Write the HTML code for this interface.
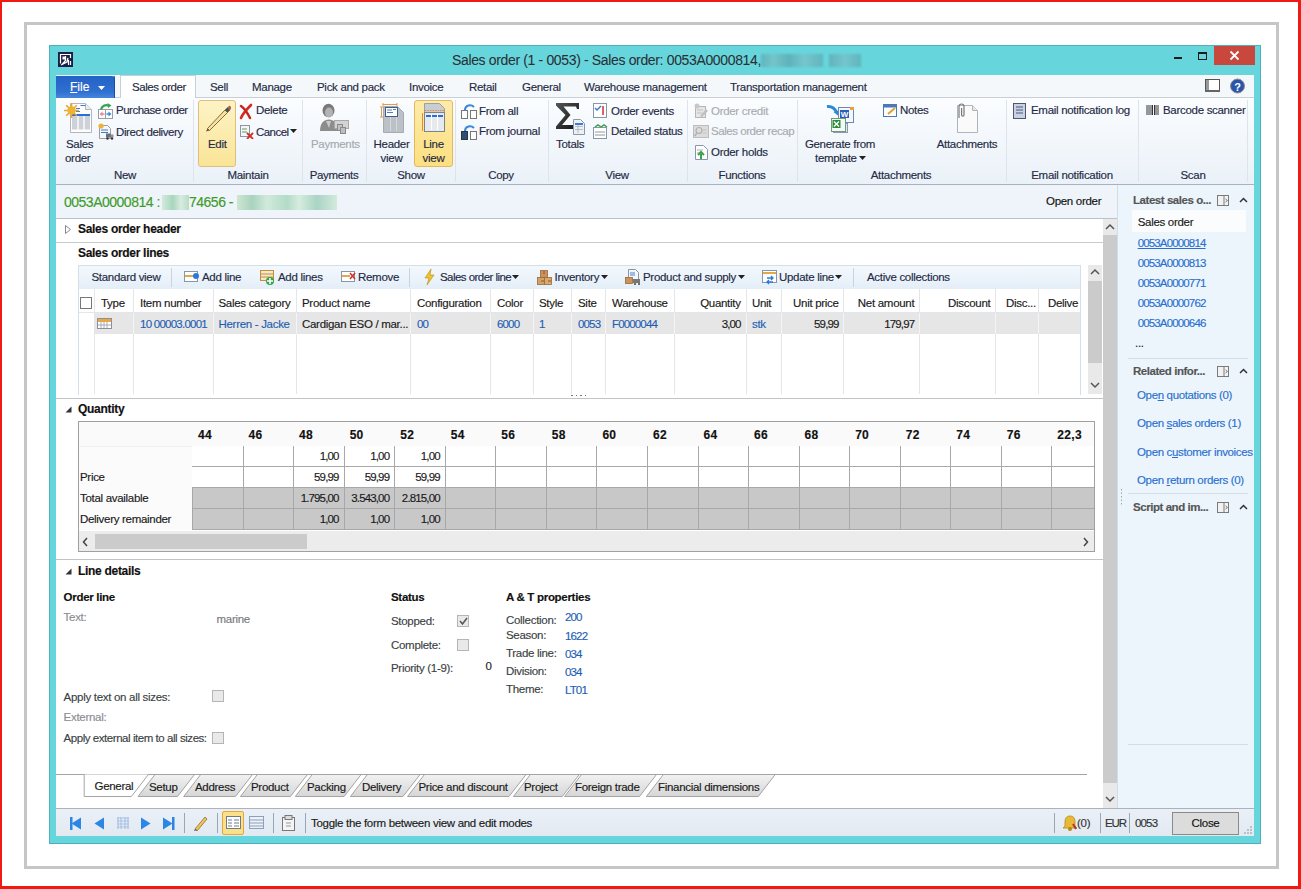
<!DOCTYPE html><html><head><meta charset="utf-8"><style>
*{margin:0;padding:0;box-sizing:border-box}
html,body{width:1301px;height:889px;overflow:hidden;background:#fff}
body{position:relative;font-family:"Liberation Sans",sans-serif;font-size:11px;color:#1f2a44}
.a{position:absolute}
.t{position:absolute;white-space:nowrap;line-height:14px;font-size:11.5px;letter-spacing:-0.3px;-webkit-text-stroke:0.15px currentColor}
.b{font-weight:bold;color:#111}
.lnk{color:#1e5fb4}
.gr{color:#a0a4aa}
.dk{color:#222}
</style></head><body>
<div class="a" style="left:0px;top:0px;width:1301px;height:889px;border:solid #f01a12;border-width:2px 3px 3px 2px"></div>
<div class="a" style="left:24px;top:22px;width:1255px;height:847px;border:3px solid #c6c6c6"></div>
<div class="a" style="left:49px;top:45px;width:1212px;height:799px;background:#66d5dc;border:1px solid #4fb0bd"></div>
<div class="t" style="left:452px;top:51px;font-size:14px;line-height:18px;letter-spacing:-0.35px;color:#2b2f33;-webkit-text-stroke:0.05px currentColor">Sales order (1 - 0053) - Sales order: 0053A0000814,</div>
<div class="a" style="left:761px;top:54px;width:62px;height:13px;background:linear-gradient(90deg,#5d9ba3,#7fb9bf 20%,#5a969e 45%,#82bcc2 70%,#5d9ba3);opacity:.55;filter:blur(1px)"></div>
<div class="a" style="left:829px;top:54px;width:32px;height:13px;background:linear-gradient(90deg,#5d9ba3,#80bac0 50%,#5d9ba3);opacity:.55;filter:blur(1px)"></div>
<svg class="a" style="left:58px;top:52px;" width="15" height="15" viewBox="0 0 15 15"><rect width="15" height="15" fill="#1a1f48"/><path d="M2.5 11.5V2.5H12.5V6" stroke="#fff" stroke-width="1.2" fill="none"/><rect x="4.5" y="4.5" width="3" height="3" fill="#fff"/><path d="M7.5 4v4.5L4 12.5M3 13l6-3 1-4" stroke="#fff" stroke-width="1.3" fill="none"/><path d="M10.5 8v5M12.5 9v4" stroke="#fff" stroke-width="1.2"/></svg>
<div class="a" style="left:1174px;top:57px;width:8px;height:2px;background:#1a1a1a"></div>
<div class="a" style="left:1198px;top:52px;width:9px;height:8px;border:1.5px solid #1a1a1a;border-top-width:2.5px"></div>
<div class="a" style="left:1214px;top:46px;width:41px;height:19px;background:#c9483e"></div>
<svg class="a" style="left:1229px;top:50px;" width="11" height="11" viewBox="0 0 11 11"><path d="M1.5 1.5L9.5 9.5M9.5 1.5L1.5 9.5" stroke="#fff" stroke-width="1.8"/></svg>
<div class="a" style="left:56px;top:75px;width:1198px;height:23px;background:#f5f8fb;border-bottom:1px solid #c9cfd6"></div>
<div class="a" style="left:56px;top:75px;width:59px;height:23px;background:linear-gradient(#2462c6,#2f6fd0 70%,#4586dc);border-top:1px solid #e8f0fa;border-right:1px solid #1f4aa0;border-radius:0 3px 0 0"></div>
<div class="t" style="left:70px;top:80.0px;color:#fff;font-size:12px;letter-spacing:0"><u>F</u>ile</div>
<svg class="a" style="left:98px;top:86px;" width="7" height="4" viewBox="0 0 7 4"><path d="M0 0h7L3.5 4z" fill="#fff"/></svg>
<div class="a" style="left:120px;top:75px;width:76px;height:23px;background:#fff;border:1px solid #c9cfd6;border-bottom:none"></div>
<div class="t" style="left:132px;top:79.5px;color:#1f2a44;letter-spacing:-0.45px">Sales order</div>
<div class="t" style="left:210px;top:79.5px;color:#1f2a44">Sell</div>
<div class="t" style="left:252px;top:79.5px;color:#1f2a44">Manage</div>
<div class="t" style="left:317px;top:79.5px;color:#1f2a44">Pick and pack</div>
<div class="t" style="left:409px;top:79.5px;color:#1f2a44">Invoice</div>
<div class="t" style="left:469px;top:79.5px;color:#1f2a44">Retail</div>
<div class="t" style="left:522px;top:79.5px;color:#1f2a44">General</div>
<div class="t" style="left:584px;top:79.5px;color:#1f2a44">Warehouse management</div>
<div class="t" style="left:730px;top:79.5px;color:#1f2a44">Transportation management</div>
<svg class="a" style="left:1205px;top:79px;" width="15" height="14" viewBox="0 0 15 14"><rect x="0.5" y="0.5" width="14" height="12" fill="#fff" stroke="#555"/><rect x="1" y="1" width="3" height="11" fill="#999"/><rect x="0" y="11" width="15" height="2" fill="#666"/></svg>
<svg class="a" style="left:1230px;top:78px;" width="15" height="16" viewBox="0 0 15 16"><circle cx="7.5" cy="8" r="7" fill="#2a55a8" stroke="#8a8f99" stroke-width="1"/><text x="7.5" y="12.5" font-size="11" font-weight="bold" text-anchor="middle" fill="#fff" font-family="Liberation Sans">?</text></svg>
<div class="a" style="left:56px;top:98px;width:1198px;height:87px;background:linear-gradient(#fbfdff,#eaf1f8);border-bottom:1px solid #a9b3bd"></div>
<div class="a" style="left:193px;top:100px;width:1px;height:82px;background:#dde4ec"></div>
<div class="a" style="left:302px;top:100px;width:1px;height:82px;background:#dde4ec"></div>
<div class="a" style="left:366px;top:100px;width:1px;height:82px;background:#dde4ec"></div>
<div class="a" style="left:455px;top:100px;width:1px;height:82px;background:#dde4ec"></div>
<div class="a" style="left:548px;top:100px;width:1px;height:82px;background:#dde4ec"></div>
<div class="a" style="left:687px;top:100px;width:1px;height:82px;background:#dde4ec"></div>
<div class="a" style="left:797px;top:100px;width:1px;height:82px;background:#dde4ec"></div>
<div class="a" style="left:1006px;top:100px;width:1px;height:82px;background:#dde4ec"></div>
<div class="a" style="left:1138px;top:100px;width:1px;height:82px;background:#dde4ec"></div>
<div class="a" style="left:1247px;top:100px;width:1px;height:82px;background:#dde4ec"></div>
<div class="t" style="left:-25px;width:300px;text-align:center;top:168.3px;color:#1f2a44">New</div>
<div class="t" style="left:98px;width:300px;text-align:center;top:168.3px;color:#1f2a44">Maintain</div>
<div class="t" style="left:184px;width:300px;text-align:center;top:168.3px;color:#1f2a44">Payments</div>
<div class="t" style="left:261px;width:300px;text-align:center;top:168.3px;color:#1f2a44">Show</div>
<div class="t" style="left:351px;width:300px;text-align:center;top:168.3px;color:#1f2a44">Copy</div>
<div class="t" style="left:467px;width:300px;text-align:center;top:168.3px;color:#1f2a44">View</div>
<div class="t" style="left:592px;width:300px;text-align:center;top:168.3px;color:#1f2a44">Functions</div>
<div class="t" style="left:751px;width:300px;text-align:center;top:168.3px;color:#1f2a44">Attachments</div>
<div class="t" style="left:922px;width:300px;text-align:center;top:168.3px;color:#1f2a44">Email notification</div>
<div class="t" style="left:1043px;width:300px;text-align:center;top:168.3px;color:#1f2a44">Scan</div>
<div class="a" style="left:198px;top:100px;width:38px;height:67px;background:linear-gradient(#fdf3c6,#fae497);border:1px solid #dcc07a;border-radius:3px"></div>
<div class="a" style="left:414px;top:100px;width:39px;height:67px;background:linear-gradient(#fdeba8,#fcdf80);border:1px solid #e2b860;border-radius:3px"></div>
<svg class="a" style="left:62px;top:101px;" width="32" height="33" viewBox="0 0 32 33"><path d="M8.5 2.5h15l6 6v23h-21z" fill="#fdfdfd" stroke="#b3b7bb"/><path d="M23.5 2.5v6h6" fill="#ececec" stroke="#b3b7bb"/><rect x="10" y="13.5" width="18" height="15" fill="#cdd2d8"/><path d="M16 13v16M22 13v16" stroke="#fff" stroke-width="1.3"/><rect x="10" y="13" width="18" height="2" fill="#2a6fd6"/><path d="M18.5 4.5h5M14 7.5h4M14 10.5h4" stroke="#3a7bd5" stroke-width="1.2"/><g stroke="#eaa62a" stroke-width="1.6"><path d="M9.5 2v15M2 9.5h15M4.2 4.2l10.6 10.6M14.8 4.2L4.2 14.8"/></g><circle cx="9.5" cy="9.5" r="4.2" fill="#f0b233"/></svg>
<div class="t" style="left:66px;top:136.8px;">Sales</div>
<div class="t" style="left:65px;top:151.0px;">order</div>
<svg class="a" style="left:98px;top:102px;" width="16" height="17" viewBox="0 0 16 17"><rect x="0.5" y="7.5" width="7" height="9" fill="#fff" stroke="#9a9ea3"/><rect x="7.5" y="7.5" width="7" height="9" fill="#fff" stroke="#9a9ea3"/><path d="M1.5 12l3-2.5v1.7h2v1.6h-2v1.7z" fill="#e48aa2"/><path d="M13.5 12l-3-2.5v1.7h-2v1.6h2v1.7z" fill="#3a8ad8"/><path d="M3 7.5C4 4 7 2.5 10.5 3.5" stroke="#3aa24a" stroke-width="2.2" fill="none"/><path d="M9.5 1l4 2.5-3.5 2.5z" fill="#3aa24a"/></svg>
<div class="t" style="left:116px;top:103.3px;letter-spacing:-0.5px">Purchase order</div>
<svg class="a" style="left:98px;top:123px;" width="16" height="17" viewBox="0 0 16 17"><path d="M1.5 2.5h8l3 3v10h-11z" fill="#f6f7f9" stroke="#9aa0a6"/><path d="M3 7h7M3 9.5h7" stroke="#3a7bd5"/><circle cx="3" cy="3" r="2.6" fill="#f0b233"/><rect x="8" y="10.5" width="5" height="4" fill="#6a7078"/><rect x="12.5" y="11.5" width="3" height="3" fill="#8a9098"/><circle cx="9.5" cy="15.5" r="1.2" fill="#333"/><circle cx="14" cy="15.5" r="1.2" fill="#333"/></svg>
<div class="t" style="left:116px;top:124.5px;letter-spacing:-0.4px">Direct delivery</div>
<svg class="a" style="left:203px;top:103px;" width="28" height="30" viewBox="0 0 28 30"><path d="M4.5 25.5L22 7l2.5 2.5L6.5 27.5z" fill="#f5e3a0" stroke="#8a6a3a"/><path d="M22 7l2.5-2.5 2.5 2.5L24.5 9.5z" fill="#3d5c4f" stroke="#6a5040" stroke-width=".6"/><path d="M24.5 4.5l2-2 2.5 2.5-2 2z" fill="#b85a4a"/><path d="M4.5 25.5l-1.5 3 3.5-1z" fill="#6a4a3a"/></svg>
<div class="t" style="left:208px;top:137.0px;">Edit</div>
<svg class="a" style="left:238px;top:103px;" width="16" height="17" viewBox="0 0 16 17"><path d="M3 3c3 2 7 8 9 12M13 2c-3 3-8 8-10 13" stroke="#d42a22" stroke-width="2.6" stroke-linecap="round" fill="none"/><path d="M3 3c3 2 7 8 9 12" stroke="#9a2a22" stroke-width=".8" fill="none"/></svg>
<div class="t" style="left:256px;top:103.3px;">Delete</div>
<svg class="a" style="left:239px;top:124px;" width="15" height="15" viewBox="0 0 15 15"><rect x="1.5" y="1.5" width="9" height="11" fill="#f4f6f8" stroke="#8a96a3"/><path d="M3 5h5M3 8h5" stroke="#5aa05a"/><path d="M8 9l6 6M14 9l-6 6" stroke="#d0302a" stroke-width="1.8"/></svg>
<div class="t" style="left:256px;top:124.5px;letter-spacing:-0.55px">Cancel</div>
<svg class="a" style="left:290px;top:129px;" width="7" height="4" viewBox="0 0 7 4"><path d="M0 0h7L3.5 4z" fill="#222"/></svg>
<svg class="a" style="left:318px;top:102px;" width="32" height="33" viewBox="0 0 32 33"><path d="M2 29C2 21 6 17.5 11 17.5S19 21 19 29z" fill="#8c8c8c"/><ellipse cx="10.5" cy="8.5" rx="6" ry="6.8" fill="#7a7a7a"/><ellipse cx="11" cy="10.5" rx="4" ry="5" fill="#b3b3b3"/><path d="M8 19l3 7 2-7" fill="#c8c8c8"/><rect x="16.5" y="18.5" width="14" height="8" fill="#d3d3d3" stroke="#a8a8a8"/><rect x="19.5" y="22.5" width="5" height="6" fill="#c4c4c4" stroke="#8a8a8a"/><rect x="22.5" y="25.5" width="5" height="6" fill="#bdbdbd" stroke="#8a8a8a"/></svg>
<div class="t" style="left:311px;top:137.0px;color:#a6a9ad">Payments</div>
<svg class="a" style="left:380px;top:102px;" width="26" height="32" viewBox="0 0 26 32"><path d="M3.5 4.5h14l6 6v20h-20z" fill="#bcc1c7" stroke="#a6abb1"/><path d="M10.5 15v14M16.5 15v14" stroke="#d5d9dd"/><rect x="5.5" y="5.5" width="12" height="9" fill="#fff" stroke="#3f5f8f"/><path d="M7 8h5M7 10.5h6M13 7.5h3" stroke="#4a7fd0"/><path d="M3 2.5H17M3 1v3M17 1v3M1.5 5v10M0 5h3M0 15h3" stroke="#ea9a44"/></svg>
<div class="t" style="left:241.5px;width:300px;text-align:center;top:137.0px;">Header</div>
<div class="t" style="left:241.5px;width:300px;text-align:center;top:150.7px;">view</div>
<svg class="a" style="left:420px;top:102px;" width="28" height="32" viewBox="0 0 28 32"><path d="M4.5 1.5h15l5 5v4h-20z" fill="#c9cdd2" stroke="#9aa0a6"/><rect x="4.5" y="10.5" width="20" height="19" fill="#e6e9ee" stroke="#7d838a"/><rect x="6" y="13" width="17" height="2" fill="#2a6fd6"/><path d="M11.5 12v16M17.5 12v16" stroke="#fff"/><path d="M5 8.5H24" stroke="#e58a3a" stroke-dasharray="1.5 1"/><path d="M2.5 11V29" stroke="#e58a3a"/></svg>
<div class="t" style="left:283.5px;width:300px;text-align:center;top:137.0px;">Line</div>
<div class="t" style="left:283.5px;width:300px;text-align:center;top:150.7px;">view</div>
<svg class="a" style="left:461px;top:103px;" width="16" height="16" viewBox="0 0 16 16"><rect x="0.5" y="7.5" width="6" height="8" fill="#fff" stroke="#777"/><rect x="9.5" y="7.5" width="6" height="8" fill="#fff" stroke="#777"/><path d="M4 7c0-5 6-6 9-3" stroke="#3a88d8" stroke-width="2" fill="none"/></svg>
<div class="t" style="left:479px;top:103.7px;">From all</div>
<svg class="a" style="left:461px;top:124px;" width="16" height="16" viewBox="0 0 16 16"><rect x="0.5" y="7.5" width="6" height="8" fill="#2a4f78" stroke="#333"/><rect x="9.5" y="7.5" width="6" height="8" fill="#fff" stroke="#777"/><path d="M4 7c0-5 6-6 9-3" stroke="#3a88d8" stroke-width="2" fill="none"/></svg>
<div class="t" style="left:479px;top:124.4px;">From journal</div>
<svg class="a" style="left:555px;top:102px;" width="31" height="33" viewBox="0 0 31 33"><defs><linearGradient id="sg" x1="0" y1="0" x2="1" y2="1"><stop offset="0" stop-color="#555"/><stop offset="1" stop-color="#111"/></linearGradient></defs><path d="M1 1H24V7H22L21 4.5H8.5L15.5 13L7 23H18V27H1V24.5L10.5 13L1 3.5z" fill="url(#sg)"/><path d="M18.5 17.5h7l4 4v11h-11z" fill="#eef1f4" stroke="#8a96a3"/><rect x="20" y="21" width="8" height="2" fill="#3a7bd5"/><path d="M20 24.5h8M20 27.5h8M23 23v8" stroke="#aab4bf" stroke-width=".8"/></svg>
<div class="t" style="left:556px;top:137.0px;">Totals</div>
<svg class="a" style="left:593px;top:103px;" width="14" height="15" viewBox="0 0 14 15"><rect x="0.5" y="0.5" width="13" height="14" fill="#fff" stroke="#8a96a3"/><path d="M2 5l2 2 4-4" stroke="#3a7bd5" stroke-width="1.5" fill="none"/><path d="M10 3v9" stroke="#d0302a" stroke-width="1.5"/></svg>
<div class="t" style="left:611px;top:103.5px;letter-spacing:-0.3px">Order events</div>
<svg class="a" style="left:593px;top:124px;" width="15" height="15" viewBox="0 0 15 15"><rect x="0.5" y="3.5" width="13" height="11" fill="#fff" stroke="#8a96a3"/><path d="M2 3l3-2 3 2M8 3l3-2 3 2" stroke="#3aa24a" stroke-width="1.5" fill="none"/><path d="M2 8h10M2 11h10" stroke="#8a96a3"/></svg>
<div class="t" style="left:611px;top:124.2px;letter-spacing:-0.3px">Detailed status</div>
<svg class="a" style="left:693px;top:103px;" width="16" height="16" viewBox="0 0 16 16"><rect x="2.5" y="3.5" width="10" height="11" fill="#e6e6e6" stroke="#b5b5b5"/><path d="M4 7h6M4 10h5" stroke="#c0c0c0"/><circle cx="4" cy="3" r="2.5" fill="#c8c8c8"/><path d="M7 13l6-7 2 2-6 6z" fill="#c0c0c0"/></svg>
<div class="t" style="left:711px;top:103.5px;color:#a8abb0">Order credit</div>
<svg class="a" style="left:693px;top:125px;" width="16" height="13" viewBox="0 0 16 13"><rect x="0.5" y="0.5" width="15" height="12" fill="#dcdcdc" stroke="#bdbdbd"/><circle cx="6" cy="5.5" r="3" fill="none" stroke="#b0b0b0" stroke-width="1.2"/><path d="M4 8l-2.5 3" stroke="#b0b0b0" stroke-width="1.4"/><path d="M10 5h4M10 8h4" stroke="#c4c4c4"/></svg>
<div class="t" style="left:711px;top:124.2px;color:#a8abb0;letter-spacing:-0.45px">Sales order recap</div>
<svg class="a" style="left:694px;top:145px;" width="15" height="15" viewBox="0 0 15 15"><path d="M1.5 0.5h8l4 4v10h-12z" fill="#fff" stroke="#8a96a3"/><path d="M3 5h6M3 8h6" stroke="#aaa"/><path d="M7 14v-5M4 10l3-3 3 3" stroke="#3aa24a" stroke-width="2" fill="none"/></svg>
<div class="t" style="left:711px;top:145.2px;">Order holds</div>
<svg class="a" style="left:824px;top:103px;" width="32" height="32" viewBox="0 0 32 32"><path d="M3 3.5C8 3 11 5.5 12.5 9.5" stroke="#2a8ad8" stroke-width="3" fill="none"/><path d="M9.5 9l6-2-1 6z" fill="#2a8ad8"/><rect x="14.5" y="4.5" width="15" height="15" fill="#f4f7fb" stroke="#6a88b8"/><rect x="26" y="4" width="4" height="3" fill="#e8a040"/><rect x="16" y="7" width="9" height="8" fill="#2b5fb8"/><text x="20.5" y="14" font-size="8" fill="#fff" text-anchor="middle" font-family="Liberation Sans" font-weight="bold">W</text><rect x="9.5" y="20.5" width="14" height="9" fill="#dfe5ec" stroke="#8a9aaa"/><rect x="7.5" y="15.5" width="14" height="13" fill="#f4f7fb" stroke="#6aa070"/><rect x="8.5" y="17" width="8" height="8" fill="#2f8a3a"/><path d="M10 18.5l5 5M15 18.5l-5 5" stroke="#fff" stroke-width="1.3"/></svg>
<div class="t" style="left:690px;width:300px;text-align:center;top:136.8px;">Generate from</div>
<div class="t" style="left:815px;top:151.0px;">template</div>
<svg class="a" style="left:859px;top:156px;" width="7" height="4" viewBox="0 0 7 4"><path d="M0 0h7L3.5 4z" fill="#222"/></svg>
<svg class="a" style="left:883px;top:104px;" width="15" height="13" viewBox="0 0 15 13"><rect x="0.5" y="0.5" width="13" height="12" fill="#fff" stroke="#4d77b8"/><rect x="0.5" y="0.5" width="13" height="3" fill="#4d77b8"/><path d="M5 10l7-6" stroke="#e0a030" stroke-width="2"/></svg>
<div class="t" style="left:900px;top:103.3px;">Notes</div>
<svg class="a" style="left:954px;top:102px;" width="26" height="32" viewBox="0 0 26 32"><path d="M3.5 3.5h15l5 5v22h-20z" fill="#fafafa" stroke="#b0b4b8"/><path d="M18.5 3.5v5h5" fill="#e8e8e8" stroke="#b0b4b8"/><path d="M5 16V4.5a2.5 2.5 0 015 0V13a1.2 1.2 0 01-2.4 0V6" stroke="#7a7a7a" stroke-width="1.2" fill="none"/></svg>
<div class="t" style="left:817px;width:300px;text-align:center;top:136.6px;">Attachments</div>
<svg class="a" style="left:1013px;top:103px;" width="13" height="16" viewBox="0 0 13 16"><rect x="0.5" y="0.5" width="12" height="15" fill="#c5d3e8" stroke="#556"/><path d="M3 4h7M3 7h7M3 10h7" stroke="#556"/></svg>
<div class="t" style="left:1031px;top:103.3px;">Email notification log</div>
<svg class="a" style="left:1146px;top:105px;" width="13" height="10" viewBox="0 0 13 10"><path d="M1 0v10M3 0v10M5 0v10M6.5 0v10M8.5 0v10M10 0v10M12 0v10" stroke="#333" stroke-width="1"/></svg>
<div class="t" style="left:1163px;top:103.3px;">Barcode scanner</div>
<div class="a" style="left:56px;top:185px;width:1062px;height:34px;background:#eef4fa;border-bottom:1px solid #b9c1c9"></div>
<div class="t" style="left:64px;top:193px;font-size:14px;line-height:18px;letter-spacing:-0.5px;color:#3e9b2c">0053A0000814 :</div>
<div class="a" style="left:162px;top:195px;width:27px;height:15px;background:linear-gradient(90deg,#d3ebdd,#a9d6bd 40%,#d6ecdf 70%,#b9dcc8);filter:blur(.7px)"></div>
<div class="t" style="left:189px;top:193px;font-size:14px;line-height:18px;letter-spacing:-0.5px;color:#3e9b2c">74656 -</div>
<div class="a" style="left:237px;top:195px;width:100px;height:15px;background:linear-gradient(90deg,#cfe6d0,#a8d3c0 15%,#d0eadb 30%,#b3dbc8 50%,#d6ecdd 62%,#a9d4c4 80%,#d3eadc);filter:blur(.7px)"></div>
<div class="t" style="left:1046px;top:194.0px;color:#111">Open order</div>
<div class="a" style="left:56px;top:219px;width:1047px;height:589px;background:#fff"></div>
<svg class="a" style="left:65px;top:225px;" width="6" height="9" viewBox="0 0 6 9"><path d="M0.5 0.5l5 4-5 4z" fill="#fff" stroke="#888"/></svg>
<div class="t b" style="left:78px;top:222.2px;font-size:12px;letter-spacing:-0.3px">Sales order header</div>
<div class="a" style="left:56px;top:242px;width:1047px;height:1px;background:#c7ccd1"></div>
<div class="t b" style="left:78px;top:246.0px;font-size:12px;letter-spacing:-0.3px">Sales order lines</div>
<div class="a" style="left:78px;top:265px;width:1003px;height:25px;background:linear-gradient(#f3f8fd,#e4eef8);border:1px solid #d5dfe9"></div>
<div class="t" style="left:91.5px;top:270.2px;">Standard view</div>
<div class="a" style="left:171px;top:268px;width:1px;height:19px;background:#c9d3dd"></div>
<div class="a" style="left:409px;top:268px;width:1px;height:19px;background:#c9d3dd"></div>
<div class="a" style="left:853px;top:268px;width:1px;height:19px;background:#c9d3dd"></div>
<svg class="a" style="left:184px;top:271px;" width="15" height="12" viewBox="0 0 15 12"><rect x="0.5" y="0.5" width="13" height="10" fill="#fff" stroke="#8a96a3"/><path d="M1 5h10" stroke="#e2a84a" stroke-width="2"/><circle cx="12" cy="5" r="3" fill="#2a78d8"/></svg>
<div class="t" style="left:202px;top:270.2px;">Add line</div>
<svg class="a" style="left:260px;top:270px;" width="15" height="15" viewBox="0 0 15 15"><rect x="0.5" y="0.5" width="13" height="10" fill="#f6e7c8" stroke="#c09040"/><path d="M1 4h12M1 7h12" stroke="#c09040"/><circle cx="10" cy="11" r="4" fill="#3aa24a"/><path d="M10 8v6M7 11h6" stroke="#fff" stroke-width="1.5"/></svg>
<div class="t" style="left:278px;top:270.2px;">Add lines</div>
<svg class="a" style="left:341px;top:271px;" width="15" height="12" viewBox="0 0 15 12"><rect x="0.5" y="0.5" width="13" height="10" fill="#fff" stroke="#8a96a3"/><path d="M1 5h8" stroke="#e2a84a" stroke-width="2"/><path d="M9 2l5 6M14 2l-5 6" stroke="#d0302a" stroke-width="1.5"/></svg>
<div class="t" style="left:358px;top:270.2px;">Remove</div>
<svg class="a" style="left:424px;top:269px;" width="11" height="16" viewBox="0 0 11 16"><path d="M7 0L1 9h4l-2 7 7-10H6z" fill="#f2c230" stroke="#b88a10" stroke-width="0.6"/></svg>
<div class="t" style="left:440px;top:270.2px;letter-spacing:-0.55px">Sales order line</div>
<svg class="a" style="left:512px;top:275px;" width="7" height="4" viewBox="0 0 7 4"><path d="M0 0h7L3.5 4z" fill="#222"/></svg>
<svg class="a" style="left:537px;top:269px;" width="15" height="16" viewBox="0 0 15 16"><rect x="0.5" y="8.5" width="7" height="7" fill="#d3a066" stroke="#9a6a3a" stroke-width=".8"/><rect x="7.5" y="8.5" width="7" height="7" fill="#d9a86e" stroke="#9a6a3a" stroke-width=".8"/><rect x="3.5" y="1.5" width="7" height="7" fill="#c8925a" stroke="#9a6a3a" stroke-width=".8"/><path d="M7 2v3M4 12h3M11 12h3" stroke="#8a5a2a"/></svg>
<div class="t" style="left:554.5px;top:270.2px;">Inventory</div>
<svg class="a" style="left:601px;top:275px;" width="7" height="4" viewBox="0 0 7 4"><path d="M0 0h7L3.5 4z" fill="#222"/></svg>
<svg class="a" style="left:625px;top:269px;" width="16" height="16" viewBox="0 0 16 16"><path d="M3.5 0.5h7l3 3v7h-10z" fill="#f4f6f8" stroke="#8a96a3"/><path d="M5 4h5M5 6h5" stroke="#4a7fd0"/><rect x="0.5" y="8.5" width="7" height="6" fill="#c8925a" stroke="#9a6a3a" stroke-width=".8"/><rect x="8" y="10" width="7" height="4" fill="#777"/><circle cx="10" cy="15" r="1" fill="#444"/><circle cx="14" cy="15" r="1" fill="#444"/></svg>
<div class="t" style="left:643px;top:270.2px;">Product and supply</div>
<svg class="a" style="left:738px;top:275px;" width="7" height="4" viewBox="0 0 7 4"><path d="M0 0h7L3.5 4z" fill="#222"/></svg>
<svg class="a" style="left:762px;top:270px;" width="16" height="15" viewBox="0 0 16 15"><rect x="0.5" y="0.5" width="14" height="12" fill="#fff" stroke="#8a96a3"/><path d="M1 3h13" stroke="#e2a84a" stroke-width="2"/><path d="M5 8h6M9 6l2 2-2 2M11 12H5M7 10l-2 2 2 2" stroke="#2a78d8" stroke-width="1.3" fill="none"/></svg>
<div class="t" style="left:779px;top:270.2px;">Update line</div>
<svg class="a" style="left:835px;top:275px;" width="7" height="4" viewBox="0 0 7 4"><path d="M0 0h7L3.5 4z" fill="#222"/></svg>
<div class="t" style="left:867px;top:270.2px;">Active collections</div>
<div class="a" style="left:78px;top:289px;width:1003px;height:24px;background:#fff;border-left:1px solid #d5dfe9;border-right:1px solid #d5dfe9"></div>
<div class="a" style="left:78px;top:312px;width:1003px;height:1px;background:#e3e6ea"></div>
<div class="a" style="left:94px;top:289px;width:1px;height:105px;background:#e4e6e9"></div>
<div class="a" style="left:133px;top:289px;width:1px;height:105px;background:#e4e6e9"></div>
<div class="a" style="left:213px;top:289px;width:1px;height:105px;background:#e4e6e9"></div>
<div class="a" style="left:296px;top:289px;width:1px;height:105px;background:#e4e6e9"></div>
<div class="a" style="left:410px;top:289px;width:1px;height:105px;background:#e4e6e9"></div>
<div class="a" style="left:490px;top:289px;width:1px;height:105px;background:#e4e6e9"></div>
<div class="a" style="left:533px;top:289px;width:1px;height:105px;background:#e4e6e9"></div>
<div class="a" style="left:571px;top:289px;width:1px;height:105px;background:#e4e6e9"></div>
<div class="a" style="left:605px;top:289px;width:1px;height:105px;background:#e4e6e9"></div>
<div class="a" style="left:674px;top:289px;width:1px;height:105px;background:#e4e6e9"></div>
<div class="a" style="left:746px;top:289px;width:1px;height:105px;background:#e4e6e9"></div>
<div class="a" style="left:781px;top:289px;width:1px;height:105px;background:#e4e6e9"></div>
<div class="a" style="left:843px;top:289px;width:1px;height:105px;background:#e4e6e9"></div>
<div class="a" style="left:919px;top:289px;width:1px;height:105px;background:#e4e6e9"></div>
<div class="a" style="left:995px;top:289px;width:1px;height:105px;background:#e4e6e9"></div>
<div class="a" style="left:1038px;top:289px;width:1px;height:105px;background:#e4e6e9"></div>
<div class="a" style="left:80px;top:297px;width:12px;height:12px;background:#fff;border:1px solid #777"></div>
<div class="t" style="left:101px;top:296.0px;color:#1a1a1a">Type</div>
<div class="t" style="left:140px;top:296.0px;color:#1a1a1a">Item number</div>
<div class="t" style="left:218.5px;top:296.0px;color:#1a1a1a">Sales category</div>
<div class="t" style="left:302px;top:296.0px;color:#1a1a1a">Product name</div>
<div class="t" style="left:417px;top:296.0px;color:#1a1a1a">Configuration</div>
<div class="t" style="left:497px;top:296.0px;color:#1a1a1a">Color</div>
<div class="t" style="left:539px;top:296.0px;color:#1a1a1a">Style</div>
<div class="t" style="left:578px;top:296.0px;color:#1a1a1a">Site</div>
<div class="t" style="left:612px;top:296.0px;color:#1a1a1a">Warehouse</div>
<div class="t" style="left:752px;top:296.0px;color:#1a1a1a">Unit</div>
<div class="t" style="left:1006px;top:296.0px;color:#1a1a1a">Disc...</div>
<div class="t" style="left:1048px;top:296.0px;color:#1a1a1a">Delive</div>
<div class="t" style="right:560.4px;top:296.0px;color:#1a1a1a">Quantity</div>
<div class="t" style="right:462.4px;top:296.0px;color:#1a1a1a">Unit price</div>
<div class="t" style="right:386.70000000000005px;top:296.0px;color:#1a1a1a">Net amount</div>
<div class="t" style="right:310.6px;top:296.0px;color:#1a1a1a">Discount</div>
<div class="a" style="left:95px;top:313px;width:986px;height:21px;background:#e6e6e6"></div>
<div class="a" style="left:133px;top:313px;width:1px;height:21px;background:#f4f4f4"></div>
<div class="a" style="left:213px;top:313px;width:1px;height:21px;background:#f4f4f4"></div>
<div class="a" style="left:296px;top:313px;width:1px;height:21px;background:#f4f4f4"></div>
<div class="a" style="left:410px;top:313px;width:1px;height:21px;background:#f4f4f4"></div>
<div class="a" style="left:490px;top:313px;width:1px;height:21px;background:#f4f4f4"></div>
<div class="a" style="left:533px;top:313px;width:1px;height:21px;background:#f4f4f4"></div>
<div class="a" style="left:571px;top:313px;width:1px;height:21px;background:#f4f4f4"></div>
<div class="a" style="left:605px;top:313px;width:1px;height:21px;background:#f4f4f4"></div>
<div class="a" style="left:674px;top:313px;width:1px;height:21px;background:#f4f4f4"></div>
<div class="a" style="left:746px;top:313px;width:1px;height:21px;background:#f4f4f4"></div>
<div class="a" style="left:781px;top:313px;width:1px;height:21px;background:#f4f4f4"></div>
<div class="a" style="left:843px;top:313px;width:1px;height:21px;background:#f4f4f4"></div>
<div class="a" style="left:919px;top:313px;width:1px;height:21px;background:#f4f4f4"></div>
<div class="a" style="left:995px;top:313px;width:1px;height:21px;background:#f4f4f4"></div>
<div class="a" style="left:1038px;top:313px;width:1px;height:21px;background:#f4f4f4"></div>
<svg class="a" style="left:97px;top:318px;" width="15" height="11" viewBox="0 0 15 11"><rect x="0.5" y="0.5" width="14" height="10" fill="#fff" stroke="#8a8f99"/><rect x="1" y="1" width="13" height="3" fill="#e8a84a"/><path d="M4 4v6M7 4v6M10 4v6M1 7h13" stroke="#aab"/></svg>
<div class="t lnk" style="left:140px;top:316.7px;letter-spacing:-0.75px">10 00003.0001</div>
<div class="t lnk" style="left:218.5px;top:316.7px;">Herren - Jacke</div>
<div class="t lnk" style="left:417px;top:316.7px;;letter-spacing:-0.85px">00</div>
<div class="t lnk" style="left:497px;top:316.7px;;letter-spacing:-0.85px">6000</div>
<div class="t lnk" style="left:539px;top:316.7px;;letter-spacing:-0.85px">1</div>
<div class="t lnk" style="left:578px;top:316.7px;;letter-spacing:-0.85px">0053</div>
<div class="t lnk" style="left:612px;top:316.7px;;letter-spacing:-0.85px">F0000044</div>
<div class="t lnk" style="left:752px;top:316.7px;">stk</div>
<div class="t" style="left:302px;top:316.7px;color:#1a1a1a">Cardigan ESO / mar...</div>
<div class="t" style="right:560.4px;top:316.7px;color:#1a1a1a;letter-spacing:-0.85px">3,00</div>
<div class="t" style="right:462.4px;top:316.7px;color:#1a1a1a;letter-spacing:-0.85px">59,99</div>
<div class="t" style="right:386.70000000000005px;top:316.7px;color:#1a1a1a;letter-spacing:-0.85px">179,97</div>
<div class="a" style="left:78px;top:289px;width:1px;height:106px;background:#d5dfe9"></div>
<div class="a" style="left:1080px;top:289px;width:1px;height:106px;background:#d5dfe9"></div>
<div class="a" style="left:571.0px;top:394.5px;width:1.5px;height:1.5px;background:#777"></div>
<div class="a" style="left:575.5px;top:394.5px;width:1.5px;height:1.5px;background:#777"></div>
<div class="a" style="left:580.0px;top:394.5px;width:1.5px;height:1.5px;background:#777"></div>
<div class="a" style="left:584.5px;top:394.5px;width:1.5px;height:1.5px;background:#777"></div>
<div class="a" style="left:1088px;top:265px;width:14px;height:129px;background:#e9e9e9"></div>
<div class="a" style="left:1088px;top:281px;width:14px;height:82px;background:#cbcbcb"></div>
<svg class="a" style="left:1090px;top:268px;" width="10" height="8" viewBox="0 0 10 8"><path d="M1 6l4-4 4 4" stroke="#555" stroke-width="1.5" fill="none"/></svg>
<svg class="a" style="left:1090px;top:381px;" width="10" height="8" viewBox="0 0 10 8"><path d="M1 2l4 4 4-4" stroke="#555" stroke-width="1.5" fill="none"/></svg>
<div class="a" style="left:56px;top:398px;width:1047px;height:1px;background:#bfc4c9"></div>
<div class="a" style="left:1103px;top:219px;width:14px;height:589px;background:#e9e9e9"></div>
<div class="a" style="left:1103px;top:235px;width:14px;height:548px;background:#cbcbcb"></div>
<svg class="a" style="left:1105px;top:223px;" width="10" height="8" viewBox="0 0 10 8"><path d="M1 6l4-4 4 4" stroke="#555" stroke-width="1.5" fill="none"/></svg>
<svg class="a" style="left:1105px;top:795px;" width="10" height="8" viewBox="0 0 10 8"><path d="M1 2l4 4 4-4" stroke="#555" stroke-width="1.5" fill="none"/></svg>
<svg class="a" style="left:65px;top:406px;" width="7" height="7" viewBox="0 0 7 7"><path d="M6.5 0.5v6h-6z" fill="#333"/></svg>
<div class="t b" style="left:78px;top:402.0px;font-size:12px;letter-spacing:-0.3px">Quantity</div>
<div class="a" style="left:78px;top:421px;width:1017px;height:131px;background:#fff;border:1px solid #a0a0a0"></div>
<div class="a" style="left:79px;top:422px;width:1015px;height:24px;background:#fafafa"></div>
<div class="a" style="left:79px;top:446px;width:113px;height:84px;background:#fbfbfb"></div>
<div class="a" style="left:192px;top:488px;width:902px;height:42px;background:#c8c8c8"></div>
<div class="a" style="left:243px;top:446px;width:1px;height:84px;background:#a8a8a8"></div>
<div class="a" style="left:293px;top:446px;width:1px;height:84px;background:#a8a8a8"></div>
<div class="a" style="left:344px;top:446px;width:1px;height:84px;background:#a8a8a8"></div>
<div class="a" style="left:394px;top:446px;width:1px;height:84px;background:#a8a8a8"></div>
<div class="a" style="left:445px;top:446px;width:1px;height:84px;background:#a8a8a8"></div>
<div class="a" style="left:495px;top:446px;width:1px;height:84px;background:#a8a8a8"></div>
<div class="a" style="left:546px;top:446px;width:1px;height:84px;background:#a8a8a8"></div>
<div class="a" style="left:596px;top:446px;width:1px;height:84px;background:#a8a8a8"></div>
<div class="a" style="left:647px;top:446px;width:1px;height:84px;background:#a8a8a8"></div>
<div class="a" style="left:698px;top:446px;width:1px;height:84px;background:#a8a8a8"></div>
<div class="a" style="left:748px;top:446px;width:1px;height:84px;background:#a8a8a8"></div>
<div class="a" style="left:799px;top:446px;width:1px;height:84px;background:#a8a8a8"></div>
<div class="a" style="left:849px;top:446px;width:1px;height:84px;background:#a8a8a8"></div>
<div class="a" style="left:900px;top:446px;width:1px;height:84px;background:#a8a8a8"></div>
<div class="a" style="left:950px;top:446px;width:1px;height:84px;background:#a8a8a8"></div>
<div class="a" style="left:1001px;top:446px;width:1px;height:84px;background:#a8a8a8"></div>
<div class="a" style="left:1051px;top:446px;width:1px;height:84px;background:#a8a8a8"></div>
<div class="a" style="left:192px;top:488px;width:1px;height:42px;background:#a8a8a8"></div>
<div class="a" style="left:192px;top:466px;width:902px;height:1px;background:#a8a8a8"></div>
<div class="a" style="left:192px;top:487px;width:902px;height:1px;background:#a8a8a8"></div>
<div class="a" style="left:192px;top:508px;width:902px;height:1px;background:#a8a8a8"></div>
<div class="a" style="left:192px;top:529px;width:902px;height:1px;background:#a8a8a8"></div>
<div class="a" style="left:79px;top:446px;width:113px;height:1px;background:#eef0f2"></div>
<div class="t" style="left:198.0px;top:427.8px;font-weight:bold;color:#111;font-size:12px;letter-spacing:0.3px">44</div>
<div class="t" style="left:248.55px;top:427.8px;font-weight:bold;color:#111;font-size:12px;letter-spacing:0.3px">46</div>
<div class="t" style="left:299.1px;top:427.8px;font-weight:bold;color:#111;font-size:12px;letter-spacing:0.3px">48</div>
<div class="t" style="left:349.65px;top:427.8px;font-weight:bold;color:#111;font-size:12px;letter-spacing:0.3px">50</div>
<div class="t" style="left:400.2px;top:427.8px;font-weight:bold;color:#111;font-size:12px;letter-spacing:0.3px">52</div>
<div class="t" style="left:450.75px;top:427.8px;font-weight:bold;color:#111;font-size:12px;letter-spacing:0.3px">54</div>
<div class="t" style="left:501.29999999999995px;top:427.8px;font-weight:bold;color:#111;font-size:12px;letter-spacing:0.3px">56</div>
<div class="t" style="left:551.8499999999999px;top:427.8px;font-weight:bold;color:#111;font-size:12px;letter-spacing:0.3px">58</div>
<div class="t" style="left:602.4px;top:427.8px;font-weight:bold;color:#111;font-size:12px;letter-spacing:0.3px">60</div>
<div class="t" style="left:652.95px;top:427.8px;font-weight:bold;color:#111;font-size:12px;letter-spacing:0.3px">62</div>
<div class="t" style="left:703.5px;top:427.8px;font-weight:bold;color:#111;font-size:12px;letter-spacing:0.3px">64</div>
<div class="t" style="left:754.05px;top:427.8px;font-weight:bold;color:#111;font-size:12px;letter-spacing:0.3px">66</div>
<div class="t" style="left:804.5999999999999px;top:427.8px;font-weight:bold;color:#111;font-size:12px;letter-spacing:0.3px">68</div>
<div class="t" style="left:855.15px;top:427.8px;font-weight:bold;color:#111;font-size:12px;letter-spacing:0.3px">70</div>
<div class="t" style="left:905.6999999999999px;top:427.8px;font-weight:bold;color:#111;font-size:12px;letter-spacing:0.3px">72</div>
<div class="t" style="left:956.25px;top:427.8px;font-weight:bold;color:#111;font-size:12px;letter-spacing:0.3px">74</div>
<div class="t" style="left:1006.8px;top:427.8px;font-weight:bold;color:#111;font-size:12px;letter-spacing:0.3px">76</div>
<div class="t" style="left:1057.35px;top:427.8px;font-weight:bold;color:#111;font-size:12px;letter-spacing:0.3px">22,3</div>
<div class="t" style="right:962.4px;top:449.4px;color:#1a1a1a;letter-spacing:-0.85px">1,00</div>
<div class="t" style="right:962.4px;top:470.3px;color:#1a1a1a;letter-spacing:-0.85px">59,99</div>
<div class="t" style="right:962.4px;top:491.2px;color:#1a1a1a;letter-spacing:-0.85px">1.795,00</div>
<div class="t" style="right:962.4px;top:511.8px;color:#1a1a1a;letter-spacing:-0.85px">1,00</div>
<div class="t" style="right:911.8px;top:449.4px;color:#1a1a1a;letter-spacing:-0.85px">1,00</div>
<div class="t" style="right:911.8px;top:470.3px;color:#1a1a1a;letter-spacing:-0.85px">59,99</div>
<div class="t" style="right:911.8px;top:491.2px;color:#1a1a1a;letter-spacing:-0.85px">3.543,00</div>
<div class="t" style="right:911.8px;top:511.8px;color:#1a1a1a;letter-spacing:-0.85px">1,00</div>
<div class="t" style="right:861.2px;top:449.4px;color:#1a1a1a;letter-spacing:-0.85px">1,00</div>
<div class="t" style="right:861.2px;top:470.3px;color:#1a1a1a;letter-spacing:-0.85px">59,99</div>
<div class="t" style="right:861.2px;top:491.2px;color:#1a1a1a;letter-spacing:-0.85px">2.815,00</div>
<div class="t" style="right:861.2px;top:511.8px;color:#1a1a1a;letter-spacing:-0.85px">1,00</div>
<div class="t" style="left:80px;top:470.3px;color:#1a1a1a">Price</div>
<div class="t" style="left:80px;top:491.2px;color:#1a1a1a">Total available</div>
<div class="t" style="left:80px;top:511.8px;color:#1a1a1a">Delivery remainder</div>
<div class="a" style="left:79px;top:531px;width:1015px;height:20px;background:#ececec"></div>
<div class="a" style="left:95px;top:534px;width:212px;height:15px;background:#cbcbcb"></div>
<svg class="a" style="left:82px;top:537px;" width="7" height="10" viewBox="0 0 7 10"><path d="M5 1L1.5 5 5 9" stroke="#444" stroke-width="1.5" fill="none"/></svg>
<svg class="a" style="left:1082px;top:537px;" width="7" height="10" viewBox="0 0 7 10"><path d="M2 1l3.5 4L2 9" stroke="#444" stroke-width="1.5" fill="none"/></svg>
<div class="a" style="left:56px;top:559px;width:1047px;height:1px;background:#bfc4c9"></div>
<svg class="a" style="left:65px;top:568px;" width="7" height="7" viewBox="0 0 7 7"><path d="M6.5 0.5v6h-6z" fill="#333"/></svg>
<div class="t b" style="left:78px;top:563.5px;font-size:12px;letter-spacing:-0.3px">Line details</div>
<div class="t b" style="left:63.6px;top:590.2px;">Order line</div>
<div class="t" style="left:63.6px;top:610.3px;color:#8a8d91">Text:</div>
<div class="t" style="left:216.6px;top:611.5px;color:#77797c">marine</div>
<div class="t" style="left:63.6px;top:689.5px;color:#3b3f44">Apply text on all sizes:</div>
<div class="a" style="left:212px;top:690px;width:12px;height:12px;background:#e9e9e9;border:1px solid #b5b5b5"></div>
<div class="t" style="left:63.6px;top:709.5px;color:#8a8d91">External:</div>
<div class="t" style="left:63.6px;top:731.3px;color:#3b3f44;letter-spacing:-0.45px">Apply external item to all sizes:</div>
<div class="a" style="left:212px;top:732px;width:12px;height:12px;background:#e9e9e9;border:1px solid #b5b5b5"></div>
<div class="t b" style="left:391px;top:590.3px;">Status</div>
<div class="t" style="left:391px;top:614.0px;color:#3b3f44">Stopped:</div>
<div class="a" style="left:457px;top:615px;width:12px;height:12px;background:#e9e9e9;border:1px solid #b5b5b5"></div>
<svg class="a" style="left:459px;top:617px;" width="9" height="8" viewBox="0 0 9 8"><path d="M1 4l2.5 3L8 1" stroke="#555" stroke-width="1.5" fill="none"/></svg>
<div class="t" style="left:391px;top:637.6px;color:#3b3f44">Complete:</div>
<div class="a" style="left:457px;top:639px;width:12px;height:12px;background:#e9e9e9;border:1px solid #b5b5b5"></div>
<div class="t" style="left:391px;top:660.6px;color:#3b3f44">Priority (1-9):</div>
<div class="t" style="left:485.5px;top:658.8px;color:#222;letter-spacing:-0.85px">0</div>
<div class="t b" style="left:506px;top:590.3px;">A &amp; T properties</div>
<div class="t" style="left:506px;top:612.7px;color:#3b3f44">Collection:</div>
<div class="t lnk" style="left:565px;top:610.4px;;letter-spacing:-0.85px">200</div>
<div class="t" style="left:506px;top:628.3px;color:#3b3f44">Season:</div>
<div class="t lnk" style="left:565px;top:628.8px;;letter-spacing:-0.85px">1622</div>
<div class="t" style="left:506px;top:646.3px;color:#3b3f44">Trade line:</div>
<div class="t lnk" style="left:565px;top:646.8px;;letter-spacing:-0.85px">034</div>
<div class="t" style="left:506px;top:664.3px;color:#3b3f44">Division:</div>
<div class="t lnk" style="left:565px;top:664.8px;;letter-spacing:-0.85px">034</div>
<div class="t" style="left:506px;top:681.8px;color:#3b3f44">Theme:</div>
<div class="t lnk" style="left:565px;top:683.2px;;letter-spacing:-0.85px">LT01</div>
<div class="a" style="left:56px;top:774px;width:1031px;height:1px;background:#a9a9a9"></div>
<div class="a" style="left:56px;top:797px;width:1047px;height:11px;background:#fff"></div>
<svg class="a" style="left:56px;top:774px;" width="1031" height="24" viewBox="0 0 1031 24"><defs><linearGradient id="tg" x1="0" y1="0" x2="0" y2="1"><stop offset="0" stop-color="#f2f2f2"/><stop offset="1" stop-color="#d6d6d6"/></linearGradient></defs><path d="M82.0 22.5L99.0 0.5H138.5L121.5 22.5z" fill="url(#tg)" stroke="#a4a4a4"/><path d="M127.7 22.5L144.7 0.5H196.5L179.5 22.5z" fill="url(#tg)" stroke="#a4a4a4"/><path d="M184.4 22.5L201.4 0.5H251.4L234.4 22.5z" fill="url(#tg)" stroke="#a4a4a4"/><path d="M239.3 22.5L256.3 0.5H305.1L288.1 22.5z" fill="url(#tg)" stroke="#a4a4a4"/><path d="M294.4 22.5L311.4 0.5H364.0L347.0 22.5z" fill="url(#tg)" stroke="#a4a4a4"/><path d="M351.5 22.5L368.5 0.5H470.0L453.0 22.5z" fill="url(#tg)" stroke="#a4a4a4"/><path d="M457.4 22.5L474.4 0.5H523.3L506.3 22.5z" fill="url(#tg)" stroke="#a4a4a4"/><path d="M508.6 22.5L525.6 0.5H600.5L583.5 22.5z" fill="url(#tg)" stroke="#a4a4a4"/><path d="M590.4 22.5L607.4 0.5H719.2L702.2 22.5z" fill="url(#tg)" stroke="#a4a4a4"/><path d="M0 0.5H28.2V22.5H75.4L92.4 0.5H1031" fill="#fff" stroke="#a4a4a4"/></svg>
<div class="t" style="left:94.5px;top:779.0px;color:#1a1a1a">General</div>
<div class="t" style="left:149px;top:779.5px;color:#1a1a1a">Setup</div>
<div class="t" style="left:195px;top:779.5px;color:#1a1a1a">Address</div>
<div class="t" style="left:251px;top:779.5px;color:#1a1a1a">Product</div>
<div class="t" style="left:307px;top:779.5px;color:#1a1a1a">Packing</div>
<div class="t" style="left:362px;top:779.5px;color:#1a1a1a">Delivery</div>
<div class="t" style="left:418.5px;top:779.5px;color:#1a1a1a">Price and discount</div>
<div class="t" style="left:524px;top:779.5px;color:#1a1a1a">Project</div>
<div class="t" style="left:575px;top:779.5px;color:#1a1a1a">Foreign trade</div>
<div class="t" style="left:658px;top:779.5px;color:#1a1a1a">Financial dimensions</div>
<div class="a" style="left:56px;top:808px;width:1198px;height:28px;background:linear-gradient(#eaf0f6,#e2e9f1);border-top:1px solid #a9b3bd"></div>
<svg class="a" style="left:70px;top:817px;" width="13" height="13" viewBox="0 0 13 13"><path d="M11 0.5v12L1.5 6.5z" fill="#2b86e6"/><rect x="0" y="0" width="2.5" height="13" fill="#2b86e6"/></svg>
<svg class="a" style="left:93px;top:817px;" width="13" height="13" viewBox="0 0 13 13"><path d="M11 0.5v12L1.5 6.5z" fill="#2b86e6"/></svg>
<svg class="a" style="left:117px;top:817px;" width="12" height="12" viewBox="0 0 12 12"><path d="M0 1h12M0 4h12M0 7h12M0 10h12M1 0v12M4 0v12M8 0v12M11 0v12" stroke="#a9c3e6" stroke-width="1.2"/></svg>
<svg class="a" style="left:140px;top:817px;" width="13" height="13" viewBox="0 0 13 13"><path d="M1 0.5v12l9.5-6z" fill="#2b86e6"/></svg>
<svg class="a" style="left:162px;top:817px;" width="13" height="13" viewBox="0 0 13 13"><path d="M1 0.5v12l9.5-6z" fill="#2b86e6"/><rect x="10" y="0" width="2.5" height="13" fill="#2b86e6"/></svg>
<div class="a" style="left:184px;top:813px;width:1px;height:20px;background:#9aa6b3"></div>
<div class="a" style="left:217px;top:813px;width:1px;height:20px;background:#9aa6b3"></div>
<div class="a" style="left:273px;top:813px;width:1px;height:20px;background:#9aa6b3"></div>
<div class="a" style="left:305px;top:813px;width:1px;height:20px;background:#9aa6b3"></div>
<div class="a" style="left:1054px;top:813px;width:1px;height:20px;background:#9aa6b3"></div>
<div class="a" style="left:1100px;top:813px;width:1px;height:20px;background:#9aa6b3"></div>
<div class="a" style="left:1129px;top:813px;width:1px;height:20px;background:#9aa6b3"></div>
<svg class="a" style="left:193px;top:815px;" width="15" height="16" viewBox="0 0 15 16"><path d="M2 14L12 2l2 2L4 16z" fill="#f1c462" stroke="#8f6b20" stroke-width="0.8"/><path d="M2 14l-1 2 3-1z" fill="#444"/></svg>
<div class="a" style="left:222px;top:811px;width:22px;height:24px;background:#fbe08a;border:1px solid #e3a83a;border-radius:2px"></div>
<svg class="a" style="left:226px;top:816px;" width="15" height="13" viewBox="0 0 15 13"><rect x="0.5" y="0.5" width="14" height="12" fill="#fff" stroke="#6c7a89"/><path d="M2 4h4M8 4h5M2 7h4M8 7h5M2 10h4M8 10h5" stroke="#6c7a89"/></svg>
<svg class="a" style="left:249px;top:816px;" width="15" height="13" viewBox="0 0 15 13"><rect x="0.5" y="0.5" width="14" height="12" fill="#eef2f8" stroke="#8aa0bb"/><path d="M1 4h13M1 7h13M1 10h13" stroke="#8aa0bb"/></svg>
<svg class="a" style="left:282px;top:815px;" width="14" height="16" viewBox="0 0 14 16"><rect x="0.5" y="2.5" width="12" height="13" fill="#f4f4f4" stroke="#777"/><rect x="3" y="0.5" width="7" height="4" fill="#ddd" stroke="#777"/><path d="M4 8h5M4 11h5" stroke="#999"/></svg>
<div class="t" style="left:311px;top:816.0px;color:#1a1a1a">Toggle the form between view and edit modes</div>
<svg class="a" style="left:1063px;top:815px;" width="14" height="16" viewBox="0 0 14 16"><path d="M7 1c-4 0-5 3-5 6v4l-2 2h14l-2-2V7c0-3-1-6-5-6z" fill="#e8b838" stroke="#b58a18" stroke-width="0.8"/><circle cx="7" cy="14" r="2" fill="#b58a18"/><path d="M10 9l3 5" stroke="#c03030" stroke-width="2"/></svg>
<div class="t" style="left:1077px;top:816.0px;color:#333">(0)</div>
<div class="t" style="left:1105px;top:816.0px;color:#333;letter-spacing:-1.1px">EUR</div>
<div class="t" style="left:1135px;top:816.0px;color:#333;letter-spacing:-0.85px">0053</div>
<div class="a" style="left:1172px;top:812px;width:67px;height:23px;background:#dcdcdc;border:1px solid #8a8a8a"></div>
<div class="t" style="left:1055.5px;width:300px;text-align:center;top:816.0px;color:#111">Close</div>
<div class="a" style="left:1250px;top:826px;width:2px;height:2px;background:#b8c0c8"></div>
<div class="a" style="left:1247px;top:829px;width:2px;height:2px;background:#b8c0c8"></div>
<div class="a" style="left:1250px;top:829px;width:2px;height:2px;background:#b8c0c8"></div>
<div class="a" style="left:1244px;top:832px;width:2px;height:2px;background:#b8c0c8"></div>
<div class="a" style="left:1247px;top:832px;width:2px;height:2px;background:#b8c0c8"></div>
<div class="a" style="left:1250px;top:832px;width:2px;height:2px;background:#b8c0c8"></div>
<div class="a" style="left:1117px;top:185px;width:137px;height:623px;background:#ecf5fc;border-left:1px solid #d4dde6"></div>
<div class="t" style="left:1133px;top:193.2px;color:#555;font-weight:bold;letter-spacing:-0.45px">Latest sales o...</div>
<svg class="a" style="left:1217px;top:195.2px;" width="12" height="11" viewBox="0 0 12 11"><rect x="0.5" y="0.5" width="11" height="10" fill="#f2f2f2" stroke="#7a7a7a"/><path d="M7 1v9M8.5 4l2 1.5-2 1.5" stroke="#7a7a7a" fill="none"/></svg>
<svg class="a" style="left:1239px;top:197.2px;" width="9" height="6" viewBox="0 0 9 6"><path d="M1 5l3.5-3.5L8 5" stroke="#333" stroke-width="1.5" fill="none"/></svg>
<div class="a" style="left:1132px;top:210px;width:114px;height:22px;background:#fbfcfd"></div>
<div class="t" style="left:1137.7px;top:215.1px;color:#1a1a1a">Sales order</div>
<div class="t lnk" style="left:1137.7px;top:235.7px;text-decoration:underline;color:#2a6fd0;letter-spacing:-0.85px">0053A0000814</div>
<div class="t lnk" style="left:1137.7px;top:255.7px;color:#2a6fd0;letter-spacing:-0.85px">0053A0000813</div>
<div class="t lnk" style="left:1137.7px;top:275.7px;color:#2a6fd0;letter-spacing:-0.85px">0053A0000771</div>
<div class="t lnk" style="left:1137.7px;top:295.7px;color:#2a6fd0;letter-spacing:-0.85px">0053A0000762</div>
<div class="t lnk" style="left:1137.7px;top:315.7px;color:#2a6fd0;letter-spacing:-0.85px">0053A0000646</div>
<div class="t" style="left:1135px;top:336.0px;color:#222">...</div>
<div class="a" style="left:1128px;top:358px;width:120px;height:1px;background:#d5dde6"></div>
<div class="t" style="left:1133px;top:364.4px;color:#555;font-weight:bold;letter-spacing:-0.45px">Related infor...</div>
<svg class="a" style="left:1217px;top:366.4px;" width="12" height="11" viewBox="0 0 12 11"><rect x="0.5" y="0.5" width="11" height="10" fill="#f2f2f2" stroke="#7a7a7a"/><path d="M7 1v9M8.5 4l2 1.5-2 1.5" stroke="#7a7a7a" fill="none"/></svg>
<svg class="a" style="left:1239px;top:368.4px;" width="9" height="6" viewBox="0 0 9 6"><path d="M1 5l3.5-3.5L8 5" stroke="#333" stroke-width="1.5" fill="none"/></svg>
<div class="t lnk" style="left:1137px;top:387.7px;color:#2a6fd0;letter-spacing:-0.35px">Ope<u>n</u> quotations (0)</div>
<div class="t lnk" style="left:1137px;top:416.0px;color:#2a6fd0;letter-spacing:-0.35px">Open <u>s</u>ales orders (1)</div>
<div class="t lnk" style="left:1137px;top:444.7px;color:#2a6fd0;letter-spacing:-0.35px">Open c<u>u</u>stomer invoices</div>
<div class="t lnk" style="left:1137px;top:473.0px;color:#2a6fd0;letter-spacing:-0.35px">Open <u>r</u>eturn orders (0)</div>
<div class="a" style="left:1128px;top:493px;width:120px;height:1px;background:#d5dde6"></div>
<div class="t" style="left:1133px;top:500.0px;color:#555;font-weight:bold;letter-spacing:-0.45px">Script and im...</div>
<svg class="a" style="left:1217px;top:502px;" width="12" height="11" viewBox="0 0 12 11"><rect x="0.5" y="0.5" width="11" height="10" fill="#f2f2f2" stroke="#7a7a7a"/><path d="M7 1v9M8.5 4l2 1.5-2 1.5" stroke="#7a7a7a" fill="none"/></svg>
<svg class="a" style="left:1239px;top:504px;" width="9" height="6" viewBox="0 0 9 6"><path d="M1 5l3.5-3.5L8 5" stroke="#333" stroke-width="1.5" fill="none"/></svg>
<div class="a" style="left:1128px;top:744px;width:120px;height:1px;background:#d5dde6"></div>
<svg class="a" style="left:1120px;top:488px;" width="3" height="18" viewBox="0 0 3 18"><path d="M1.5 1v16" stroke="#9aa" stroke-dasharray="1.5 2"/></svg>
</body></html>
